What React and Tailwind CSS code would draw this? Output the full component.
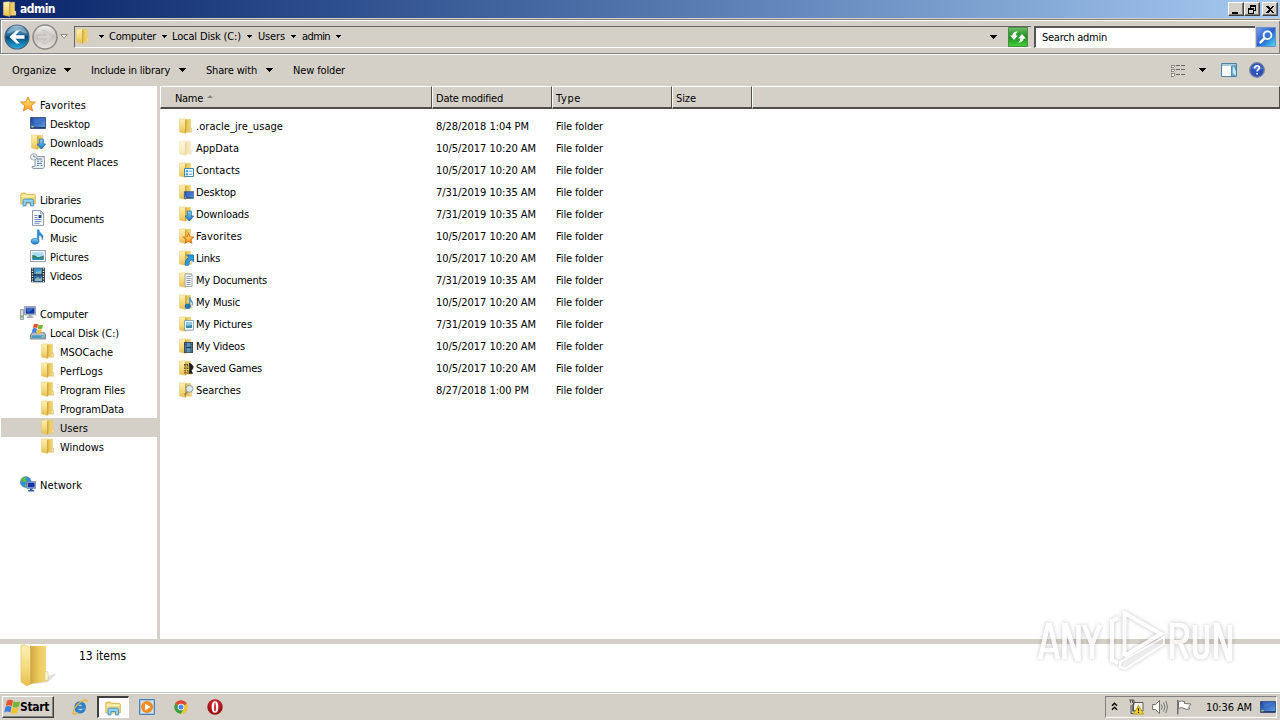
import React, { useLayoutEffect, useRef } from "react";

/* Text run whose tracking is tuned so that it occupies the given width. */
function T({ w, children, className = "" }) {
  const ref = useRef(null);
  useLayoutEffect(() => {
    const el = ref.current;
    el.style.letterSpacing = "0px";
    const natural = el.getBoundingClientRect().width;
    el.style.letterSpacing = (w - natural) / String(children).length + "px";
  }, [w, children]);
  return (
    <span ref={ref} className={"inline-block shrink-0 whitespace-pre " + className}>
      {children}
    </span>
  );
}

const Svg = ({ size = 16, box = 16, className = "", children }) => (
  <svg width={size} height={size} viewBox={`0 0 ${box} ${box}`} className={"shrink-0 " + className}>
    {children}
  </svg>
);

const Defs = () => (
  <svg className="absolute size-0">
    <defs>
      <linearGradient id="fold" x1="0" y1="0" x2="0" y2="1">
        <stop offset="0" stopColor="#fdf0b4" />
        <stop offset="0.6" stopColor="#f3d878" />
        <stop offset="1" stopColor="#e6bd50" />
      </linearGradient>
      <linearGradient id="foldback" x1="0" x2="1">
        <stop offset="0" stopColor="#d0a53c" />
        <stop offset="0.5" stopColor="#eccb60" />
        <stop offset="1" stopColor="#f2d877" />
      </linearGradient>
      <linearGradient id="blue" x1="0" y1="0" x2="1" y2="1">
        <stop offset="0" stopColor="#163c9c" />
        <stop offset="1" stopColor="#5fa4ea" />
      </linearGradient>
      <linearGradient id="sky" x1="0" y1="0" x2="0" y2="1">
        <stop offset="0" stopColor="#8fd4f5" />
        <stop offset="1" stopColor="#1672bd" />
      </linearGradient>
      <linearGradient id="nav" x1="0" y1="0" x2="0" y2="1">
        <stop offset="0" stopColor="#a8c7da" />
        <stop offset="0.42" stopColor="#1d6597" />
        <stop offset="0.5" stopColor="#064578" />
        <stop offset="1" stopColor="#28b2e5" />
      </linearGradient>
      <linearGradient id="navoff" x1="0" y1="0" x2="0" y2="1">
        <stop offset="0" stopColor="#f3f2ef" />
        <stop offset="0.5" stopColor="#c6c3be" />
        <stop offset="1" stopColor="#e8e6e2" />
      </linearGradient>
      <linearGradient id="green" x1="0" y1="0" x2="0" y2="1">
        <stop offset="0" stopColor="#6fbf66" />
        <stop offset="0.5" stopColor="#168c1b" />
        <stop offset="1" stopColor="#4bd03b" />
      </linearGradient>
      <linearGradient id="find" x1="0" y1="0" x2="1" y2="1">
        <stop offset="0" stopColor="#7f9fec" />
        <stop offset="0.5" stopColor="#2460cf" />
        <stop offset="1" stopColor="#4de0f8" />
      </linearGradient>
      <linearGradient id="star" x1="0" y1="0" x2="0" y2="1">
        <stop offset="0" stopColor="#fff27a" />
        <stop offset="1" stopColor="#ff9a1f" />
      </linearGradient>
      <radialGradient id="red" cy="0.35">
        <stop offset="0" stopColor="#e04a48" />
        <stop offset="1" stopColor="#a00d10" />
      </radialGradient>
    </defs>
  </svg>
);

const Folder = () => (
  <g>
    <path d="M6 1.200h6.600v8.500l1 .6v3.900H6z" fill="url(#foldback)" stroke="#e3c873" strokeWidth=".5" />
    <path d="M1.400 1.200l5.400-.4 1 1.200v13.400L1.400 14z" fill="url(#fold)" stroke="#e2c56c" strokeWidth=".5" />
    <path d="M7.600 2.200v12.800" stroke="#cb9f36" strokeWidth=".9" />
    <path d="M12.200 10v3.700h1.500V10.500z" fill="#fffadf" stroke="#d2b76c" strokeWidth=".5" />
  </g>
);
const starPath = "M8 .8l2.100 5 5.300.4-4.100 3.500 1.300 5.200L8 12.100l-4.600 2.800 1.300-5.200L.6 6.200l5.300-.4z";
const DownArrow = () => (
  <path d="M9.300 5h4v5h2.300l-4.300 5-4.300-5h2.300z" fill="url(#sky)" stroke="#1b6ead" strokeWidth=".8" />
);
const FlagLogo = () => (
  <g>
    <path d="M3 1.800q3-2 6 0L7.800 7.200q-3-1.800-6 0z" fill="#e5532a" />
    <path d="M9.600 2.200q3 1.800 6.400 0L14.700 7.700q-3.200 1.800-6.200 0z" fill="#77b52f" />
    <path d="M1.500 8q3-1.800 6 0l-1.200 5.500q-3-1.800-6 0z" fill="#3d7fda" />
    <path d="M8.200 8.500q3 1.800 6.300 0l-1.300 5.500q-3.200 1.800-6.200 0z" fill="#f6c12c" />
  </g>
);
const Screen = () => (
  <g>
    <path d="M.5 2.500h15v11H.5z" fill="url(#blue)" stroke="#45587f" />
    <path d="M1 12h14v1.300H1z" fill="#26406f" />
    <path d="M1.500 11h2v1.500h-2z" fill="#b6d46a" />
    <path d="M2 3.200h12L5 9z" fill="#5b8fe0" opacity=".35" />
  </g>
);

const ICONS = {
  folder: <Folder />,
  hidden: <g opacity=".45"><Folder /></g>,
  star: <path d={starPath} fill="url(#star)" stroke="#e08220" strokeWidth=".9" />,
  desktop: <Screen />,
  downloads: <g><Folder /><DownArrow /></g>,
  recent: (
    <g>
      <path d="M5 3.500h9.500q-1 1 0 3v7.700q-1 1.300-2.500 1.300H3.500q-1.800-.3-1.500-2h3z" fill="#e9eef3" stroke="#7f8c99" strokeWidth=".9" />
      <path d="M7 6h5M7 8.200h2M10.500 8.200h2M7 10.400h5M7 12.400h2M10.500 12.400h2" stroke="#5d7b9c" strokeWidth="1" />
      <circle cx="3.800" cy="3.800" r="3.300" fill="#f2f6fa" stroke="#8a97a4" strokeWidth=".8" />
      <path d="M3.800 1.800v2.200h1.800" fill="none" stroke="#4c6484" strokeWidth=".8" />
    </g>
  ),
  libraries: (
    <g>
      <path d="M.8 3.500q0-1.400 1.300-1.400h3.200l1 1.200h7.500q1.500 0 1.500 1.500v8H.8z" fill="#f4dc7c" stroke="#cfa940" strokeWidth=".8" />
      <path d="M1.500 5.200h13" stroke="#fff6c4" strokeWidth="1.300" />
      <path d="M3 14.900V9.600Q3 8.100 4.500 8.100h7.600q1.500 0 1.500 1.500v5.300h-3v-3.400H6v3.400z" fill="#92d1ee" stroke="#3f8fc2" strokeWidth=".9" />
    </g>
  ),
  documents: (
    <g>
      <path d="M2.500.6h8l3.200 3.200v11.600H2.500z" fill="#fbfdff" stroke="#7c8b9b" strokeWidth=".9" />
      <path d="M10.400.7v3.200h3.200z" fill="#c9d6e2" stroke="#7c8b9b" strokeWidth=".6" />
      <path d="M4.500 5.500h3M4.500 7.500h3M4.500 9.500h7M4.500 11.500h7M4.500 13.300h5" stroke="#5b81b4" strokeWidth=".9" />
      <path d="M8.500 5h3v3h-3z" fill="#26508c" />
    </g>
  ),
  music: (
    <g>
      <path d="M7.300 12V.7h1.500q.3 2.700 2.700 4.100 2.700 2.200.7 6.200.3-4-3.300-5v7z" fill="#2b8fd6" stroke="#1669ab" strokeWidth=".4" />
      <ellipse cx="5" cy="12.300" rx="4" ry="3" fill="url(#sky)" stroke="#1c74b5" strokeWidth=".6" />
    </g>
  ),
  pictures: (
    <g>
      <path d="M.6 2.600h14.800v11H.6z" fill="#fff" stroke="#81909f" strokeWidth=".9" />
      <path d="M2.300 4.200h11.400V12H2.300z" fill="#a7dcf4" />
      <path d="M2.300 7q3 0 5 1.900 3 .7 6.400-1.300V10H2.300z" fill="#317b55" />
      <path d="M2.300 9.700h11.400V12H2.300z" fill="#2d89ac" />
    </g>
  ),
  videos: (
    <g>
      <path d="M1 .7h14v14.600H1z" fill="#242d38" />
      <path d="M4 1.200h8v6H4z" fill="#3d93c9" />
      <path d="M4 8.400h8v6.300H4z" fill="#2c6daa" />
      <path d="M5 6.800q2-4 3-2l3-1.500v3.700zM5 12l3-2 2 2 2-2v4H5z" fill="#8bb7bd" />
      <path d="M2.500 1.300v13.600M13.500 1.300v13.600" stroke="#eef3f7" strokeWidth="1.400" strokeDasharray="1.300 1.200" />
    </g>
  ),
  computer: (
    <g>
      <path d="M.5 4.500h3v10h-3z" fill="#d6d9df" stroke="#878d99" strokeWidth=".8" />
      <path d="M1.400 10h1.200v3H1.400z" fill="#54ba3c" />
      <path d="M4.600 1.600h11v8.200h-11z" fill="#cdd2dd" stroke="#7e8698" strokeWidth=".8" />
      <path d="M5.800 2.700h8.700v6H5.800z" fill="#1538a9" />
      <path d="M5.800 2.700h8.700L8 7.700z" fill="#5688e3" opacity=".6" />
      <path d="M8.500 10h3v1.600h-3zM6.700 11.600h6.700v1.400H6.700z" fill="#a5abb6" />
    </g>
  ),
  disk: (
    <g>
      <path d="M2 8.700h12.500l1 2.300v4H.5v-4z" fill="#b7c0cb" stroke="#606d7c" strokeWidth=".8" />
      <path d="M1.500 11.300h13v2.700h-13z" fill="#4e9ac7" />
      <path d="M11.500 12.200h2v1.200h-2z" fill="#8df079" />
      <g transform="translate(1.600 -1) scale(.72)"><FlagLogo /></g>
    </g>
  ),
  network: (
    <g>
      <circle cx="5.800" cy="6" r="5.400" fill="#2f8cdf" stroke="#246eb0" strokeWidth=".5" />
      <path d="M2 2.600q3-2.400 5-1.600l-1.500 2.500 1.500 2-2.400 1L3 5 1 6.200Q.7 4 2 2.600zM5 8l3 .6L6.400 11q-2.400 0-1.400-3z" fill="#63be3d" />
      <path d="M6.800 5.600h8.800v6.800H6.800z" fill="#c2cadb" stroke="#5f7196" strokeWidth=".7" />
      <path d="M7.800 6.600h6.800v4.800H7.800z" fill="#1635ab" />
      <path d="M10 12.500h2.500V14H10zM8.200 14h6v1.400h-6z" fill="#2f5fbd" />
    </g>
  ),
  contacts: (
    <g>
      <Folder />
      <path d="M6.500 6.500h9v8h-9z" fill="#eefaff" stroke="#3f86b4" />
      <path d="M7.800 8.200h2.200v2H7.800zM7.800 11.300h2.200v2H7.800z" fill="#3c91cf" />
      <path d="M11 9.200h3.200M11 12.200h3.200" stroke="#6aa5cf" />
    </g>
  ),
  deskfolder: <g><Folder /><g transform="translate(6 6) scale(.62)"><Screen /></g></g>,
  favfolder: (
    <g><Folder /><path transform="translate(5 4.800) scale(.69)" d={starPath} fill="url(#star)" stroke="#d7741a" strokeWidth="1.500" /></g>
  ),
  links: (
    <g><Folder /><path d="M8.500 5h7v6.800l-2.200-2q-2.800 1.300-2.500 5.400H7.200q-.6-5 3.600-7.800z" fill="#2b9be3" stroke="#166eb0" strokeWidth=".8" /></g>
  ),
  docfolder: (
    <g>
      <Folder />
      <path d="M7 2h7v12.500H7z" fill="#fbfdff" stroke="#8694a2" strokeWidth=".8" />
      <path d="M8.400 4.500h4.200M8.400 6.500h4.200M8.400 8.500h4.200M8.400 10.500h4.200M8.400 12.500h4.200" stroke="#6d7c8d" strokeWidth=".8" />
    </g>
  ),
  musfolder: (
    <g>
      <Folder />
      <path d="M11 3h1.200q.3 1.800 1.600 3.200 2.200 3 .3 6 .3-4-1.900-4.700v5.300H11z" fill="#4a97cd" />
      <ellipse cx="9.800" cy="12.200" rx="3" ry="2.700" fill="#2774b5" />
    </g>
  ),
  picfolder: (
    <g>
      <Folder />
      <path d="M6.500 4.500h9v9.700h-9z" fill="#f7fbff" stroke="#6994ae" strokeWidth=".8" />
      <path d="M8 6h6v5H8z" fill="#8bc8eb" />
      <path d="M8 9q3 1.500 6-.6V12H8z" fill="#3b86a3" />
    </g>
  ),
  vidfolder: <g><Folder /><g transform="translate(6 4) scale(.6 .7)">
    <path d="M0 0h15v15.500H0z" fill="#293644" />
    <path d="M4 1h7v6H4zM4 8.500h7v6H4z" fill="#5396bc" />
    <path d="M2 1v14M13 1v14" stroke="#d5e2ec" strokeWidth="1.500" strokeDasharray="1.300 1.500" />
  </g></g>,
  games: (
    <g>
      <Folder />
      <path d="M6 4.500h4.500M6 8h4.500M6 13h5M7 5v8M9.800 5v8" stroke="#4a3d17" strokeWidth="1.100" strokeDasharray="1.600 .9" />
      <path d="M11 2.500q3 1 4.600 4.200-.3 2.900-2.100 3.600l1.500 3.500h-4.500l.7-4z" fill="#22201e" />
    </g>
  ),
  searches: (
    <g>
      <Folder />
      <path d="M9.300 9.700l-2.800 3.700" stroke="#9d8b61" strokeWidth="1.800" />
      <circle cx="11.400" cy="6.800" r="3.500" fill="#dcebf1" fillOpacity=".9" stroke="#8c9ba4" />
    </g>
  ),
};

const Icon = ({ name, className }) => <Svg className={className}>{ICONS[name]}</Svg>;

const Caret = ({ className = "", small }) => (
  <svg width={small ? 5 : 7} height={small ? 3 : 4} viewBox="0 0 7 4" className={"shrink-0 " + className} shapeRendering="crispEdges">
    <path d="M0 0h7L3.500 4z" fill="#000" />
  </svg>
);

const WinButton = ({ children }) => (
  <span className="flex h-[14px] w-4 items-center justify-center border border-t-white border-l-white border-r-[#404040] border-b-[#404040] bg-[#d4d0c8] shadow-[inset_-1px_-1px_0_#808080]">
    <svg width="12" height="11" viewBox="0 0 12 11" shapeRendering="crispEdges" className="shrink-0">{children}</svg>
  </span>
);

const TREE = [
  [0, "star", "Favorites", 46],
  [1, "desktop", "Desktop", 40],
  [1, "downloads", "Downloads", 53],
  [1, "recent", "Recent Places", 68],
  null,
  [0, "libraries", "Libraries", 41],
  [1, "documents", "Documents", 54],
  [1, "music", "Music", 27],
  [1, "pictures", "Pictures", 39],
  [1, "videos", "Videos", 32],
  null,
  [0, "computer", "Computer", 48],
  [1, "disk", "Local Disk (C:)", 69],
  [2, "folder", "MSOCache", 53],
  [2, "folder", "PerfLogs", 43],
  [2, "folder", "Program Files", 65],
  [2, "folder", "ProgramData", 64],
  [2, "folder", "Users", 28],
  [2, "folder", "Windows", 44],
  null,
  [0, "network", "Network", 42],
];
const INDENT = ["pl-[19px]", "pl-[29px]", "pl-[39px]"];

const FILES = [
  ["folder", ".oracle_jre_usage", 87, "8/28/2018 1:04 PM", 93],
  ["hidden", "AppData", 43, "10/5/2017 10:20 AM", 100],
  ["contacts", "Contacts", 44, "10/5/2017 10:20 AM", 100],
  ["deskfolder", "Desktop", 40, "7/31/2019 10:35 AM", 100],
  ["downloads", "Downloads", 53, "7/31/2019 10:35 AM", 100],
  ["favfolder", "Favorites", 46, "10/5/2017 10:20 AM", 100],
  ["links", "Links", 24, "10/5/2017 10:20 AM", 100],
  ["docfolder", "My Documents", 71, "7/31/2019 10:35 AM", 100],
  ["musfolder", "My Music", 44, "10/5/2017 10:20 AM", 100],
  ["picfolder", "My Pictures", 56, "7/31/2019 10:35 AM", 100],
  ["vidfolder", "My Videos", 49, "10/5/2017 10:20 AM", 100],
  ["games", "Saved Games", 66, "10/5/2017 10:20 AM", 100],
  ["searches", "Searches", 45, "8/27/2018 1:00 PM", 93],
];

const HeadCell = ({ className, children }) => (
  <div className={"flex h-[23px] items-center border-t border-b-2 border-l border-t-white border-l-white border-b-[#504e4b] pt-[2px] " + className}>
    {children}
  </div>
);

function TitleBar() {
  return (
    <div className="flex h-[18px] items-center bg-linear-to-r from-[#0a246a] to-[#a6caf0] pr-[2px] pl-[2px]">
      <Icon name="folder" />
      <T w={35} className="ml-[2px] text-[12px] font-bold text-white">admin</T>
      <div className="ml-auto flex">
        <WinButton><path d="M2 8h6v2H2z" /></WinButton>
        <WinButton>
          <path d="M4 1h6v6H8V6h1V3H5v1H4zM2 4h6v6H2zM3 6v3h4V6z" fillRule="evenodd" />
        </WinButton>
        <span className="w-[2px]" />
        <WinButton><path d="M2 2h2l2 2 2-2h2L7 5.500l3 3.500H8L6 7 4 9H2l3-3.500z" /></WinButton>
      </div>
    </div>
  );
}

function AddressBar() {
  const crumbs = [["Computer", 47, "ml-[5px]"], ["Local Disk (C:)", 69, "ml-[5px]"], ["Users", 27, "ml-[6px]"], ["admin", 28, "ml-[6px]"]];
  return (
    <div className="mt-px flex h-[35px] items-center border-t border-b border-l border-t-[#808080] border-b-[#808080] border-l-[#808080] pl-[3px] shadow-[inset_1px_1px_0_#fff,inset_-1px_0_0_#808080,0_1px_0_#fff]">
      <Svg size={26} box={26}>
        <circle cx="13" cy="13" r="12" fill="url(#nav)" stroke="#4a6580" strokeWidth="1.200" />
        <path d="M4 9q8-7 18 0" stroke="#d7e8f2" strokeWidth="2" fill="none" opacity=".35" />
        <path d="M5.500 13l7-6.500h3.200l-4.200 4.800h9v3.400h-9l4.200 4.800h-3.200z" fill="#fff" />
      </Svg>
      <Svg size={26} box={26} className="ml-[2px]">
        <circle cx="13" cy="13" r="12" fill="url(#navoff)" stroke="#8b8a87" strokeWidth="1.500" />
        <path d="M20.500 13l-7-6.500h-3.200l4.200 4.800h-9v3.400h9l-4.200 4.800h3.200z" fill="#d4d1cc" stroke="#bbb8b3" strokeWidth=".6" />
      </Svg>
      <svg width="8" height="5" viewBox="0 0 8 5" className="ml-[2px] shrink-0"><path d="M.7.5h6.600L4 4.300z" fill="#f6f5f2" stroke="#77746f" strokeWidth=".8" /></svg>
      <div className="ml-[6px] flex h-[22px] w-[957px] items-center border-t border-b border-l border-t-[#666] border-l-[#666] border-b-white">
        <Icon name="folder" className="mb-px" />
        <Caret small className="ml-[8px]" />
        {crumbs.map(([t, w, m]) => (
          <React.Fragment key={t}>
            <T w={w} className={m}>{t}</T>
            <Caret small className="ml-[6px]" />
          </React.Fragment>
        ))}
        <Caret className="mr-[11px] ml-auto" />
        <Svg size={20} box={20} className="mr-[3px]">
          <path d="M.5.5h19v19H.5z" fill="url(#green)" stroke="#4f8b4d" />
          <path d="M2 8.500l4 4.500 4-4.500H7.700q-.2-2.300 2.300-4-5-.3-5.700 4z" fill="#fff" />
          <path d="M18 11.500l-4-4.500-4 4.500h2.300q.2 2.300-2.300 4 5 .3 5.700-4z" fill="#fff" />
        </Svg>
      </div>
      <div className="ml-[3px] flex h-[22px] w-[221px] items-center border-t-2 border-b border-l-2 border-t-[#555] border-l-[#555] border-b-white bg-white pl-[6px]">
        <T w={65}>Search admin</T>
      </div>
      <Svg size={20} box={20} className="ml-px">
        <path d="M.5.5h19v19H.5z" fill="url(#find)" stroke="#6f8fc9" />
        <path d="M8.600 11.200L4.500 15.300" stroke="#fff" strokeWidth="2.600" strokeLinecap="round" />
        <circle cx="11.500" cy="8.200" r="3.900" fill="#3d76d8" stroke="#fff" strokeWidth="1.800" />
      </Svg>
    </div>
  );
}

function CommandBar() {
  return (
    <div className="mt-px flex h-[31px] items-center pb-px pl-[12px]">
      <T w={44}>Organize</T>
      <Caret className="ml-[8px]" />
      <T w={79} className="ml-[20px]">Include in library</T>
      <Caret className="ml-[9px]" />
      <T w={51} className="ml-[20px]">Share with</T>
      <Caret className="ml-[9px]" />
      <T w={52} className="ml-[20px]">New folder</T>
      <div className="mr-[15px] ml-auto flex items-center">
        <svg width="16" height="13" viewBox="0 0 16 13" className="shrink-0" shapeRendering="crispEdges">
          <path d="M1 1h3v2H1zM1 5h3v2H1zM1 9h3v3H1z" fill="#fff" stroke="#77736d" strokeWidth=".8" />
          <path d="M6 1.500h4M11 1.500h4M6 5.500h4M11 5.500h4M6 10.500h4M11 10.500h4" stroke="#66686d" strokeWidth="1" />
        </svg>
        <Caret className="ml-[13px]" />
        <svg width="16" height="14" viewBox="0 0 16 14" className="ml-[15px] shrink-0">
          <path d="M.5.5h15v13H.5z" fill="#fff" stroke="#4c82a6" />
          <path d="M1 1h14v2H1z" fill="#a4cade" />
          <path d="M10.500 3h4.500v10h-4.500z" fill="#70b5d8" stroke="#3e7fa8" strokeWidth=".8" />
          <path d="M12 3l3 5v5l-3-3z" fill="#c5e7f6" />
        </svg>
        <Svg className="ml-[12px]">
          <circle cx="8" cy="8" r="7.300" fill="#2c53b7" stroke="#7886a3" strokeWidth="1.300" />
          <path d="M2.500 6.500q5-6.500 11 0-5 2-11 0z" fill="#89a7e8" opacity=".6" />
          <path d="M5.800 6.300q0-2.500 2.300-2.500t2.300 2q0 1.200-1.200 1.900-1.100.7-1.100 1.900M8.100 11v1.600" fill="none" stroke="#fff" strokeWidth="1.600" />
        </Svg>
      </div>
    </div>
  );
}

function Watermark() {
  return (
    <svg className="pointer-events-none absolute top-[603px] left-[1034px]" width="204" height="72" viewBox="0 0 204 72">
      <g style={{ filter: "drop-shadow(0 0 2px rgba(0,0,0,.3))" }} opacity=".8" fill="none" stroke="#fff" strokeWidth="4.500">
        <path d="M6 56L14 22h2l8 34M9 47h12M30.500 56V22h1.500l11 34h1.500V22M50 22l8 20 8-20M58 40v16" />
        <path d="M84 60l-6-3V18l6-3M90.500 53V10L127 31 90.500 53" strokeWidth="4" />
        <path d="M86 59l44-25v7L91 66l-5-2z" strokeWidth="2" fill="#fff" fillOpacity=".5" />
        <path d="M138 56V22h7q8 0 8 8.500t-8 8.500h-7M146 39l7 17M161 22v25q0 7 6 7t6-7V22M182 56V22h1.500l11 34h1.500V22" />
      </g>
    </svg>
  );
}

function Taskbar() {
  return (
    <div className="flex h-[28px] items-center border-t border-[#c4c9c8] bg-[#d4d0c8] pt-px pl-[2px] shadow-[inset_0_1px_0_#fff]">
      <div className="flex h-[22px] w-[52px] items-center border border-t-white border-l-white border-r-[#404040] border-b-[#404040] pl-px shadow-[inset_-1px_-1px_0_#808080]">
        <Svg><FlagLogo /></Svg>
        <T w={29} className="text-[12px] font-bold">Start</T>
      </div>
      <Svg className="ml-[18px]">
        <path d="M13.500 10.500q-1.400 3.800-5.400 3.800-5.500 0-5.500-5.800t5.500-5.800q5.900 0 5.600 6.800H6q.2 2.200 2.200 2.200 1.400 0 2-1.200zM6 7.300h4.400q-.3-2-2.200-2T6 7.300z" fill="#2484d6" stroke="#1b5fa7" strokeWidth=".4" fillRule="evenodd" />
        <path d="M2.500 15q-2.500.2-1-3.500Q4.500 5 11 1.700q5-2 3.900 1.800M2.500 15q1.500 0 3.500-1.500" fill="none" stroke="#e9b534" strokeWidth="1.300" />
      </Svg>
      <div className="ml-[9px] flex h-[22px] w-[32px] items-center justify-center border-t-2 border-r border-b border-l-2 border-t-[#404040] border-r-white border-b-white border-l-[#404040] bg-[#fbfaf8]">
        <Icon name="libraries" className="mr-[2px]" />
      </div>
      <Svg className="ml-[10px]">
        <path d="M.5.5h15v15H.5z" fill="#9fc4e6" stroke="#4b82bb" />
        <path d="M2 2h12v12H2z" fill="#d5e7f5" />
        <circle cx="8" cy="8" r="6" fill="#f68b1e" />
        <path d="M6 4.500v7l5.500-3.500z" fill="#fff" />
      </Svg>
      <Svg className="ml-[18px]">
        <circle cx="8" cy="8" r="6.700" fill="#eac02c" />
        <path d="M8 8L2.200 4.650A6.700 6.700 0 0 1 13.800 4.650z" fill="#dc4936" />
        <path d="M8 8L2.200 4.650A6.700 6.700 0 0 0 8 14.700l3-5z" fill="#379e50" />
        <path d="M8 4.650h5.800L11 9.700 8 14.700a6.700 6.700 0 0 0 5.800-10.050z" fill="#f1c532" />
        <circle cx="8" cy="8" r="3.300" fill="#fff" />
        <circle cx="8" cy="8" r="2.500" fill="#4d87e8" />
      </Svg>
      <Svg className="ml-[18px]">
        <circle cx="8" cy="8" r="7.700" fill="url(#red)" />
        <path d="M8 2.200q3.300 0 3.300 5.800T8 13.800 4.700 8 8 2.200zM8 3.500q-1 0-1 4.500t1 4.500 1-4.500-1-4.500z" fill="#fff" fillRule="evenodd" />
      </Svg>
      <div className="mr-[3px] ml-auto flex h-[22px] w-[172px] items-center border border-t-[#808080] border-r-white border-b-white border-l-[#808080] pl-[5px]">
        <svg width="7" height="9" viewBox="0 0 7 9" className="mb-[2px] shrink-0"><path d="M1 3.800L3.500 1.300 6 3.800M1 7.800l2.500-2.500L6 7.800" fill="none" stroke="#000" strokeWidth="1.400" /></svg>
        <Svg className="ml-[10px]">
          <path d="M5.500 3.500h9.500V12H5.500z" fill="#f0eee9" stroke="#5f5d59" />
          <path d="M1 1h5v4.500H4.700V12H8v2.500H3M2.500 1v3M4.500 1v3M3 6v9" fill="none" stroke="#55534f" strokeWidth="1" />
          <path d="M10.500 6.500L15.500 15h-10z" fill="#f5d429" stroke="#b79517" strokeWidth=".9" />
          <path d="M10.500 9.200v3M10.500 13v1" stroke="#222" strokeWidth="1.200" />
        </Svg>
        <Svg className="ml-[8px]">
          <path d="M.7 5.500h2.800L7.500 1.500v13l-4-4H.7z" fill="#fff" stroke="#5f5d59" strokeWidth=".9" />
          <path d="M9.300 5.500q1.700 2.500 0 5M11.500 3.500q3 4.500 0 9M13.700 2q3.200 6 0 12" fill="none" stroke="#77746f" strokeWidth="1" />
        </Svg>
        <Svg className="ml-[8px]">
          <path d="M1.800 1v14.500" stroke="#66645f" strokeWidth="1.300" />
          <path d="M2.500 2.500q3-1 6 0v2l6.500.5-2.300 3 .8 2q-4 1-5.500-.7-2.500-1.200-5.500 0z" fill="#fff" stroke="#66645f" strokeWidth=".9" />
        </Svg>
        <T w={46} className="ml-[14px]">10:36 AM</T>
        <Icon name="desktop" className="ml-[8px]" />
      </div>
    </div>
  );
}

export default function App() {
  return (
    <div className="relative flex h-[720px] w-[1280px] flex-col overflow-hidden bg-[#d4d0c8] font-['DejaVu_Sans_Condensed','DejaVu_Sans',sans-serif] text-[11px] leading-[15px] text-black [font-stretch:condensed]">
      <Defs />
      <TitleBar />
      <AddressBar />
      <CommandBar />
      <div className="flex h-[553px] w-full">
        <nav className="w-[157px] shrink-0 bg-white pt-[9px] pl-px">
          {TREE.map((n, i) =>
            n ? (
              <div key={i} className={"flex h-[19px] items-center pt-px " + INDENT[n[0]] + (n[2] === "Users" ? " bg-[#d4d0c8]" : "")}>
                <Icon name={n[1]} className="mb-[2px]" />
                <T w={n[3]} className="mt-px ml-[4px]">{n[2]}</T>
              </div>
            ) : (
              <div key={i} className="h-[19px]" />
            )
          )}
        </nav>
        <div className="w-[3px] shrink-0" />
        <main className="flex-1 bg-white">
          <div className="flex bg-[#d4d0c8]">
            <HeadCell className="w-[272px] border-r border-r-[#504e4b] pl-[14px]">
              <T w={28}>Name</T>
              <svg width="6" height="3" viewBox="0 0 6 3" className="mb-[3px] ml-[4px]"><path d="M0 3h6L3 0z" fill="#898681" /></svg>
            </HeadCell>
            <HeadCell className="w-[120px] border-r border-r-[#504e4b] pl-[3px]"><T w={67}>Date modified</T></HeadCell>
            <HeadCell className="w-[120px] border-r border-r-[#504e4b] pl-[3px]"><T w={25}>Type</T></HeadCell>
            <HeadCell className="w-[80px] border-r border-r-[#504e4b] pl-[3px]"><T w={20}>Size</T></HeadCell>
            <HeadCell className="flex-1 border-r border-r-[#504e4b]" />
          </div>
          <div className="pt-[6px]">
            {FILES.map(([icon, name, w, date, dw]) => (
              <div key={name} className="flex h-[22px] items-center pl-[18px]">
                <Icon name={icon} className="mb-px" />
                <div className="ml-[2px] w-[240px]"><T w={w}>{name}</T></div>
                <div className="w-[120px]"><T w={dw}>{date}</T></div>
                <T w={47}>File folder</T>
              </div>
            ))}
          </div>
        </main>
      </div>
      <div className="h-[5px] shrink-0" />
      <div className="flex h-[48px] shrink-0 bg-white pl-[16px]">
        <svg width="44" height="46" viewBox="0 0 44 46" className="shrink-0">
          <path d="M29 33l12-4-9 9-13 2z" fill="#b7b7b4" opacity=".45" />
          <path d="M14 2h16v25l2 3v7l-17 3z" fill="url(#foldback)" />
          <path d="M5 1h5l5 4v35l-4 2-6-4z" fill="url(#fold)" stroke="#e0c167" strokeWidth=".7" />
          <path d="M15 5v35" stroke="#c99c36" />
          <path d="M29 27l3 1v8l-3 1z" fill="#fff9dc" stroke="#d6bd77" strokeWidth=".6" />
        </svg>
        <T w={47} className="mt-[5px] ml-[19px] text-[12px]">13 items</T>
      </div>
      <Taskbar />
      <Watermark />
    </div>
  );
}
